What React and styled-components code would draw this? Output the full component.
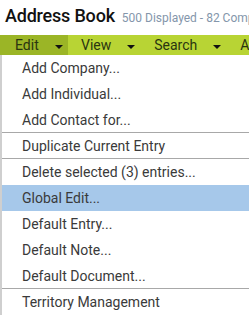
import React from "react";
import styled, { createGlobalStyle } from "styled-components";

const menu = [
  { label: "Add Company..." },
  { label: "Add Individual..." },
  { label: "Add Contact for...", sep: true },
  { label: "Duplicate Current Entry", sep: true },
  { label: "Delete selected (3) entries..." },
  { label: "Global Edit...", active: true },
  { label: "Default Entry..." },
  { label: "Default Note..." },
  { label: "Default Document...", sep: true },
  { label: "Territory Management" },
];

const tabs = [
  { label: "Edit", open: true },
  { label: "View" },
  { label: "Search" },
  { label: "Actions" },
];

const App = () => {
  return (
    <Page>
      <GlobalStyle />
      <Header>
        <Title>Address Book</Title>
        <Sub>500 Displayed - 82 Companies</Sub>
      </Header>
      <MenuBar>
        {tabs.map(t => (
          <Tab key={t.label} open={t.open}>
            {t.label}
            <Caret />
          </Tab>
        ))}
      </MenuBar>
      <Dropdown>
        {menu.map(m => (
          <Item key={m.label} sep={m.sep} active={m.active}>
            {m.label}
          </Item>
        ))}
      </Dropdown>
    </Page>
  );
};

const GlobalStyle = createGlobalStyle`
  body {
    margin: 0;
    background: #fff;
    font-family: Roboto, "Liberation Sans", sans-serif;
    overflow: hidden;
  }
`;

const Page = styled.div`
  width: 249px;
  height: 316px;
  overflow: hidden;
`;

const Header = styled.div`
  display: flex;
  align-items: baseline;
  white-space: nowrap;
  padding: 5px 0 0 5px;
  height: 30px;
  box-sizing: border-box;
`;

const Title = styled.span`
  font-size: 18px;
  font-weight: 500;
  letter-spacing: -0.2px;
  color: #111;
`;

const Sub = styled.span`
  font-size: 12px;
  color: #8496ab;
  margin-left: 7px;
`;

const MenuBar = styled.div`
  display: flex;
  height: 20px;
  margin-top: 5px;
  background: #b8d434;
  white-space: nowrap;
`;

const Tab = styled.div`
  display: flex;
  align-items: center;
  padding: 0 6px 0 ${props => (props.open ? "15px" : "13px")};
  width: ${props => (props.open ? "68px" : "auto")};
  box-sizing: border-box;
  font-size: 14px;
  color: #2a3410;
  background: ${props => (props.open ? "#9bb526" : "transparent")};
  flex-shrink: 0;
`;

const Caret = styled.span`
  width: 0;
  height: 0;
  border-left: 4px solid transparent;
  border-right: 4px solid transparent;
  border-top: 4px solid #111;
  margin-left: 16px;
  margin-top: 3px;
`;

const Dropdown = styled.div`
  border-left: 2px solid #cfcfcf;
  background: #fff;
`;

const Item = styled.div`
  height: 26px;
  display: flex;
  align-items: center;
  padding-left: 20px;
  font-size: 14px;
  color: #3a3a3a;
  white-space: nowrap;
  box-sizing: border-box;
  background: ${props => (props.active ? "#a6c8ea" : "#fff")};
  border-bottom: ${props => (props.sep ? "1px solid #a8a8a8" : "none")};
`;

export default App;
